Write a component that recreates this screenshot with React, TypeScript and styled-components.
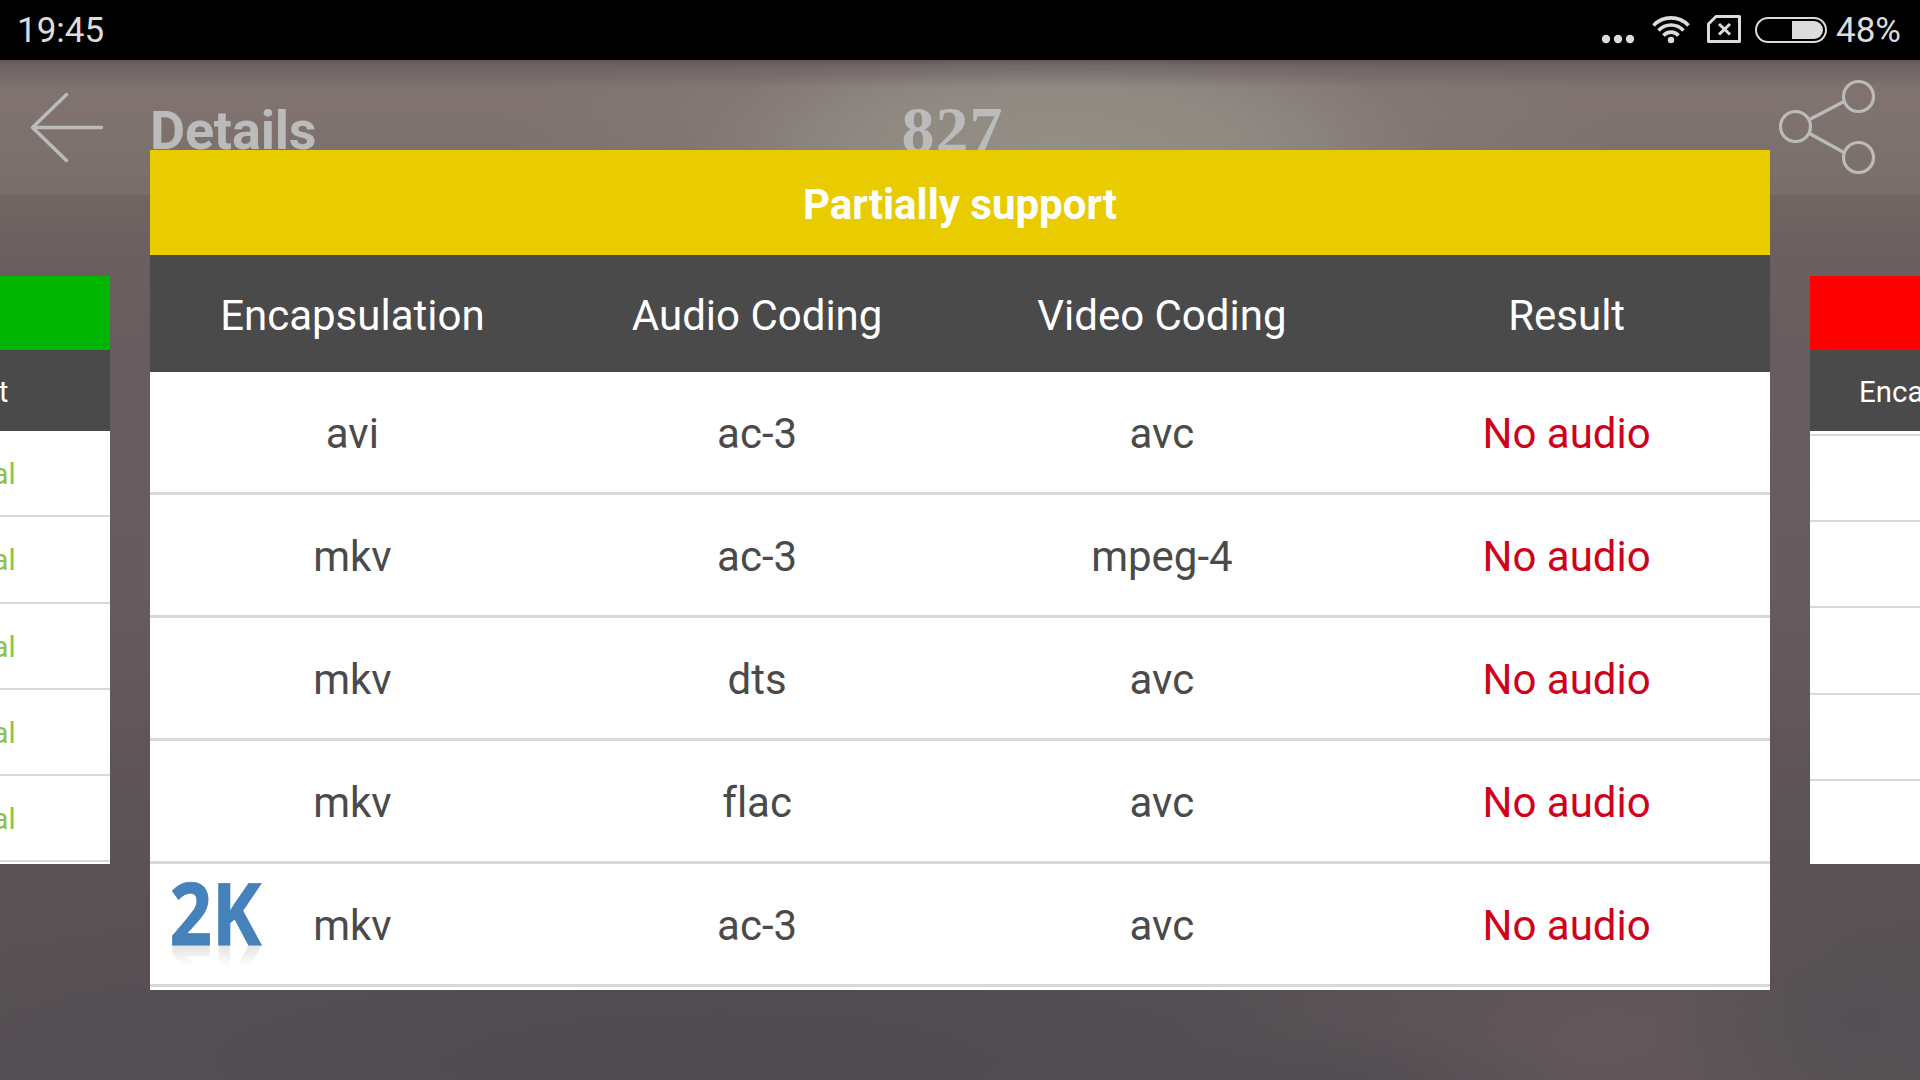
import React from 'react';
import styled, { createGlobalStyle } from 'styled-components';

const GlobalStyle = createGlobalStyle`
  * {
    box-sizing: border-box;
  }

  body {
    margin: 0;
    overflow: hidden;
    font-family: Roboto, 'Noto Sans', sans-serif;
    font-variant-ligatures: none;
  }
`;

const Screen = styled.div`
  display: flex;
  flex-direction: column;
  width: 1920px;
  height: 1080px;
  overflow: hidden;
  background: #5b5256;
`;

const StatusBar = styled.header`
  display: flex;
  align-items: center;
  flex: none;
  height: 60px;
  padding: 0 19px 0 17px;
  background: #000;
  color: #dcdcdc;
  font-size: 35px;
  line-height: 60px;
`;

const StatusText = styled.span`
  padding-top: 2px;
`;

const Clock = styled(StatusText)`
  flex: 1;
`;

const StatusIcons = styled.svg`
  display: block;
  margin-right: 9px;
`;

const Stage = styled.main`
  flex: 1;
  display: flex;
  flex-direction: column;
  min-height: 0;
  background:
    linear-gradient(180deg, rgba(88, 78, 84, 0.8) 0, rgba(92, 82, 86, 0.5) 6px, rgba(92, 82, 86, 0) 28px),
    linear-gradient(180deg, rgba(0, 0, 0, 0) 135px, rgba(60, 50, 56, 0.12) 135px, rgba(60, 50, 56, 0) 300px),
    radial-gradient(ellipse 560px 190px at 1060px 90px, #938e86 0, #8f8982 35%, rgba(134, 122, 118, 0.6) 65%, rgba(128, 115, 112, 0) 100%),
    radial-gradient(ellipse 180px 130px at 1860px 960px, rgba(82, 80, 83, 0.9) 0, rgba(82, 80, 83, 0) 100%),
    radial-gradient(ellipse 240px 70px at 1320px 1030px, rgba(80, 76, 81, 0.9) 0, rgba(80, 76, 81, 0) 100%),
    radial-gradient(ellipse 420px 200px at 1600px 980px, rgba(99, 87, 90, 0.9) 0, rgba(99, 87, 90, 0) 100%),
    radial-gradient(ellipse 950px 170px at 720px 1000px, rgba(79, 76, 80, 1) 0, rgba(80, 77, 82, 0.9) 40%, rgba(80, 77, 82, 0) 100%),
    linear-gradient(180deg, #80736f 0, #80736f 50px, #7a6f6a 120px, #6e6361 200px, #685c60 300px, #675b5f 520px, #5f5558 700px, #5a5155 850px, #585154 1020px);
`;

const Toolbar = styled.div`
  display: grid;
  grid-template-columns: 150px 1fr auto 1fr 150px;
  flex: none;
  height: 90px;
  color: #bbb;
`;

const BackIcon = styled.svg`
  display: block;
  margin: 30px 0 0 28px;
`;

const ShareIcon = styled.svg`
  display: block;
  margin: 18px 0 0 6px;
`;

const PageTitle = styled.h1`
  margin: 0;
  font-size: 54px;
  font-weight: 700;
  letter-spacing: -0.2px;
  line-height: 142px;
`;

const Score = styled.div`
  margin-right: 15px;
  font-family: 'Liberation Serif', serif;
  font-size: 66px;
  font-weight: 700;
  letter-spacing: 1px;
  line-height: 139px;
`;

const Carousel = styled.div`
  display: flex;
  justify-content: center;
  gap: 40px;
`;

const Card = styled.section<{ $scale: number }>`
  --s: ${({ $scale }) => $scale};
  display: flex;
  flex-direction: column;
  flex: none;
  position: relative;
  align-self: center;
  width: calc(1620px * var(--s));
  height: calc(840px * var(--s));
  overflow: hidden;
  background: #fff;
  font-size: calc(42px * var(--s));
`;

const CardTitle = styled.h2<{ $color: string }>`
  flex: none;
  height: calc(105px * var(--s));
  margin: 0;
  background: ${({ $color }) => $color};
  color: #fff;
  font-size: inherit;
  font-weight: 700;
  line-height: calc(109px * var(--s));
  text-align: center;
`;

const TableRow = styled.div`
  display: grid;
  grid-template-columns: repeat(4, 1fr);
  flex: none;
  position: relative;
  height: calc(123px * var(--s));
  padding-right: 1px;
  border-bottom: calc(3px * var(--s)) solid #d8d8d8;
  color: #4a4a4a;
  line-height: calc(124px * var(--s));
  text-align: center;
`;

const TableHead = styled(TableRow)`
  height: calc(117px * var(--s));
  border-bottom: 0;
  background: #4a4a4a;
  color: #fff;
  line-height: calc(121px * var(--s));
`;

const TableBody = styled.div<{ $scroll: number }>`
  flex: 1;
  min-height: 0;
  overflow: hidden;

  > :first-child {
    margin-top: calc(${({ $scroll }) => -$scroll}px * var(--s));
  }
`;

const Result = styled.span<{ $color: string }>`
  color: ${({ $color }) => $color};
`;

const Badge = styled.svg`
  position: absolute;
  left: 16px;
  top: 8px;
  font-family: 'Open Sans', 'Noto Sans', sans-serif;
  font-size: 86px;
  font-weight: 700;
`;

type Row = {
  encapsulation?: string;
  audio?: string;
  video?: string;
  result?: string;
  is2K?: boolean;
};

type SupportCardProps = {
  title?: string;
  color: string;
  resultColor: string;
  rows: Row[];
  scale?: number;
  scroll?: number;
};

const COLUMNS = ['Encapsulation', 'Audio Coding', 'Video Coding', 'Result'];

const supported: Row[] = Array.from({ length: 5 }, () => ({ result: 'Normal' }));

const partial: Row[] = [
  { encapsulation: 'avi', audio: 'ac-3', video: 'avc', result: 'No audio' },
  { encapsulation: 'mkv', audio: 'ac-3', video: 'mpeg-4', result: 'No audio' },
  { encapsulation: 'mkv', audio: 'dts', video: 'avc', result: 'No audio' },
  { encapsulation: 'mkv', audio: 'flac', video: 'avc', result: 'No audio' },
  { encapsulation: 'mkv', audio: 'ac-3', video: 'avc', result: 'No audio', is2K: true },
];

const unsupported: Row[] = Array.from({ length: 7 }, () => ({}));

function ResolutionBadge() {
  return (
    <Badge width="100" height="100" viewBox="0 0 100 100">
      <defs>
        <linearGradient id="fade" x1="0" y1="73" x2="0" y2="94" gradientUnits="userSpaceOnUse">
          <stop offset="0" stopColor="#fff" />
          <stop offset="1" stopColor="#000" />
        </linearGradient>
        <mask id="reflection" maskUnits="userSpaceOnUse" x="0" y="73" width="100" height="27">
          <rect y="73" width="100" height="27" fill="url(#fade)" />
        </mask>
      </defs>
      <g mask="url(#reflection)">
        <g transform="translate(0 146) scale(1 -1)" fill="#e4e2df" aria-hidden="true">
          <text x="3.500" y="73" textLength="92" lengthAdjust="spacingAndGlyphs">2K</text>
        </g>
      </g>
      <text x="3.500" y="73" textLength="92" lengthAdjust="spacingAndGlyphs" fill="#4581ba" stroke="#4581ba" strokeWidth="0.8">2K</text>
    </Badge>
  );
}

function SupportCard({ title, color, resultColor, rows, scale = 1, scroll = 0 }: SupportCardProps) {
  return (
    <Card $scale={scale}>
      <CardTitle $color={color}>{title}</CardTitle>
      <TableHead>
        {COLUMNS.map((column) => (
          <span key={column}>{column}</span>
        ))}
      </TableHead>
      <TableBody $scroll={scroll}>
        {rows.map((row, index) => (
          <TableRow key={index}>
            {row.is2K && <ResolutionBadge />}
            <span>{row.encapsulation}</span>
            <span>{row.audio}</span>
            <span>{row.video}</span>
            <Result $color={resultColor}>{row.result}</Result>
          </TableRow>
        ))}
      </TableBody>
    </Card>
  );
}

export default function App() {
  return (
    <Screen>
      <GlobalStyle />
      <StatusBar>
        <Clock>19:45</Clock>
        <StatusIcons width="227" height="60" viewBox="1600 0 227 60" fill="none" stroke="#dcdcdc">
          <g fill="#dcdcdc" stroke="none">
            <circle cx="1606" cy="39" r="4.2" />
            <circle cx="1618" cy="39" r="4.2" />
            <circle cx="1630" cy="39" r="4.2" />
            <circle cx="1671" cy="40" r="3.2" />
            <path d="M1792 21h22a9 9 0 0 1 0 18h-22z" />
          </g>
          <path d="M1653.5 25.5a24 24 0 0 1 35 0M1658.5 30.5a17 17 0 0 1 25 0M1663.5 35.5a10 10 0 0 1 15 0" strokeWidth="3.600" />
          <path d="M1716 16.500h23.500v25h-31v-17.500z" strokeWidth="3" strokeLinejoin="round" />
          <path d="M1719 24l11 10.500M1730 24l-11 10.500" strokeWidth="3" />
          <rect x="1756" y="18" width="70" height="24" rx="12" strokeWidth="2" />
        </StatusIcons>
        <StatusText>48%</StatusText>
      </StatusBar>
      <Stage>
        <Toolbar>
          <BackIcon width="80" height="75" viewBox="28 90 80 75" fill="none" stroke="#bbb" strokeWidth="3.400" strokeLinecap="round" strokeLinejoin="round">
            <path d="M66.500 94.500L32.500 127.500L66.500 160.500M33 127.500H101.500" />
          </BackIcon>
          <PageTitle>Details</PageTitle>
          <Score>827</Score>
          <span />
          <ShareIcon width="110" height="100" viewBox="1776 78 110 100" fill="none" stroke="#bbb" strokeWidth="3.200">
            <circle cx="1795.500" cy="126.500" r="15" />
            <circle cx="1858.500" cy="96.500" r="15" />
            <circle cx="1858.500" cy="157.500" r="15" />
            <path d="M1809.500 119.500L1844 101.500M1809.500 133.500L1844 152.500" />
          </ShareIcon>
        </Toolbar>
        <Carousel>
          <SupportCard color="#00b600" resultColor="#8bc34a" rows={supported} scale={0.7} />
          <SupportCard title="Partially support" color="#e9cc00" resultColor="#d0021b" rows={partial} />
          <SupportCard color="#f00" resultColor="#d0021b" rows={unsupported} scale={0.7} scroll={116} />
        </Carousel>
      </Stage>
    </Screen>
  );
}
